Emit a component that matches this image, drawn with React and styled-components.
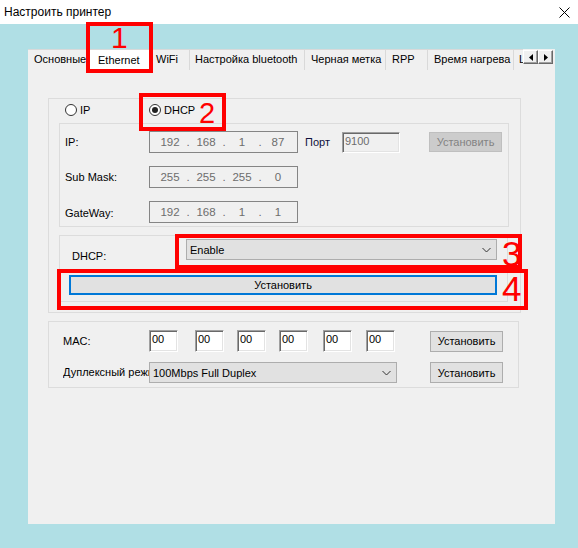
import React from 'react';
import styled, { createGlobalStyle } from 'styled-components';

const GlobalStyle = createGlobalStyle`
	html,
	body {
		margin: 0;
		padding: 0;
		background: #b0dfe5;
	}
	body {
		font-family: 'Liberation Sans', Arial, sans-serif;
		font-size: 11px;
		color: #000;
	}
	* {
		box-sizing: border-box;
	}
`;

// window frame
const Window = styled.div`
	position: relative;
	width: 578px;
	height: 548px;
	display: flex;
	flex-direction: column;
	background: #b0dfe5;
	overflow: hidden;
`;
const TitleBar = styled.div`
	flex: none;
	height: 24px;
	display: flex;
	align-items: center;
	padding-left: 4px;
	background: #fff;
	font-size: 12px;
`;
const Title = styled.span`
	flex: 1;
`;
const Close = styled.svg`
	width: 11px;
	height: 11px;
	margin-right: 8px;
`;
const Body = styled.div`
	flex: 1;
	display: flex;
	padding: 25px 23px 24px 28px;
`;
const Panel = styled.div`
	flex: 1;
	display: flex;
	flex-direction: column;
	background: #f0f0f0;
`;

// tabs
const TabStrip = styled.div`
	flex: none;
	height: 21px;
	display: flex;
`;
const Tabs = styled.div`
	width: 495px;
	display: flex;
	overflow: hidden;
	border-top: 1px solid #d9d9d9;
`;
const Tab = styled.div`
	flex: none;
	width: ${(p) => p.$w}px;
	height: 20px;
	padding-left: ${(p) => p.$pl || 6}px;
	line-height: 19px;
	white-space: nowrap;
	border-right: 1px solid #d9d9d9;
	background: #f0f0f0;
`;
const ActiveTab = styled(Tab)`
	position: relative;
	z-index: 1;
	height: 23px;
	margin: -3px -2px 0;
	padding-top: 3px;
	background: #fff;
	border: 1px solid #d9d9d9;
	border-bottom: none;
`;
const ScrollButtons = styled.div`
	display: flex;
	margin-top: 1px;
`;
const ScrollButton = styled.div`
	width: 15px;
	height: 14px;
	display: flex;
	align-items: center;
	justify-content: center;
	background: #f0f0f0;
	border: 1px solid;
	border-color: #fff #696969 #696969 #fff;
	box-shadow: inset -1px -1px 0 #a0a0a0;
`;

const PanelBody = styled.div`
	display: flex;
	flex-direction: column;
	gap: 8px;
	padding: 28px 0 0 20px;
`;

// groups
const Group = styled.div`
	width: ${(p) => p.$w}px;
	height: ${(p) => (p.$h ? `${p.$h}px` : 'auto')};
	border: 1px solid #dcdcdc;
	padding: ${(p) => p.$pad};
	display: flex;
	flex-direction: column;
`;
const SubBox = styled.div`
	width: ${(p) => p.$w}px;
	height: ${(p) => p.$h}px;
	margin-top: ${(p) => p.$mt || 0}px;
	border: 1px solid #dcdcdc;
	padding: ${(p) => p.$pad};
	display: flex;
	flex-direction: column;
	gap: ${(p) => p.$gap || 0}px;
`;
const RadioRow = styled.div`
	display: flex;
	height: 12px;
	padding-left: 6px;
	margin-bottom: 7px;
	align-items: center;
`;
const RadioItem = styled.label`
	display: flex;
	align-items: center;
	width: ${(p) => p.$w || 'auto'};
	gap: 3px;
	line-height: 12px;
`;
const RadioDot = styled.span`
	width: 12px;
	height: 12px;
	border-radius: 50%;
	border: 1px solid #333;
	background: #fff;
	display: flex;
	align-items: center;
	justify-content: center;

	&::after {
		content: '';
		width: 6px;
		height: 6px;
		border-radius: 50%;
		background: ${(p) => (p.$on ? '#222' : 'transparent')};
	}
`;

const Row = styled.div`
	display: flex;
	align-items: ${(p) => p.$align || 'center'};
	height: ${(p) => p.$h || 22}px;
	margin-top: ${(p) => p.$mt || 0}px;
`;
const Label = styled.span`
	flex: none;
	width: ${(p) => p.$w}px;
	padding-left: ${(p) => p.$pl || 0}px;
	margin-top: ${(p) => p.$mt || 0}px;
	margin-left: ${(p) => p.$ml || 0}px;
	color: ${(p) => p.$color || '#000'};
	white-space: nowrap;
	overflow: hidden;
	line-height: 13px;
`;

const IpBox = styled.div`
	width: 149px;
	height: 22px;
	border: 1px solid #858585;
	display: flex;
	align-items: center;
	padding-left: 5px;
	color: #6d6d6d;
	font-size: 11.5px;
`;
const IpSeg = styled.span`
	width: 30px;
	text-align: center;
`;
const IpDot = styled.span`
	width: 6px;
	text-align: center;
`;

const Sunken = styled.div`
	flex: none;
	width: ${(p) => p.$w}px;
	height: ${(p) => p.$h || 22}px;
	margin-left: ${(p) => p.$ml || 0}px;
	padding: 2px 0 0 2px;
	line-height: 13px;
	background: ${(p) => (p.$disabled ? '#f0f0f0' : '#fff')};
	color: ${(p) => (p.$disabled ? '#6d6d6d' : '#000')};
	border: 1px solid;
	border-color: #a0a0a0 #fff #fff #a0a0a0;
	box-shadow: inset 1px 1px 0 #696969, inset -1px -1px 0 #e3e3e3;
`;

const Button = styled.div`
	flex: none;
	width: ${(p) => (p.$w ? `${p.$w}px` : '100%')};
	height: ${(p) => p.$h || 21}px;
	margin-left: ${(p) => p.$ml || 0}px;
	margin-top: ${(p) => p.$mt || 0}px;
	display: flex;
	align-items: center;
	justify-content: center;
	background: ${(p) => (p.$disabled ? '#cccccc' : '#e1e1e1')};
	color: ${(p) => (p.$disabled ? '#838383' : '#000')};
	border: ${(p) => (p.$focus ? '2px solid #0078d7' : `1px solid ${p.$disabled ? '#bfbfbf' : '#adadad'}`)};
`;

const Select = styled.div`
	flex: none;
	width: ${(p) => p.$w}px;
	height: 21px;
	display: flex;
	align-items: center;
	justify-content: space-between;
	padding: 0 5px 0 3px;
	background: #e1e1e1;
	border: 1px solid #adadad;
`;

// red annotation marks
const Mark = styled.div`
	position: absolute;
	left: ${(p) => p.$x}px;
	top: ${(p) => p.$y}px;
	width: ${(p) => p.$w}px;
	height: ${(p) => p.$h}px;
	border: 4px solid #ff0000;
	pointer-events: none;
	z-index: 5;
`;
const Digit = styled.div`
	position: absolute;
	left: ${(p) => p.$x}px;
	top: ${(p) => p.$y}px;
	font-size: ${(p) => p.$size}px;
	line-height: 1;
	color: #ff0000;
	z-index: 6;
`;

const Chevron = () => (
	<svg width="9" height="6" viewBox="0 0 9 6">
		<path d="M0.5 1 L4.5 5 L8.5 1" fill="none" stroke="#333" strokeWidth="1" />
	</svg>
);

const IpAddress = ({ parts }) => (
	<IpBox>
		<IpSeg>{parts[0]}</IpSeg>
		<IpDot>.</IpDot>
		<IpSeg>{parts[1]}</IpSeg>
		<IpDot>.</IpDot>
		<IpSeg>{parts[2]}</IpSeg>
		<IpDot>.</IpDot>
		<IpSeg>{parts[3]}</IpSeg>
	</IpBox>
);

const macGaps = [0, 17, 13, 13, 15, 14];

const App = () => {
	return (
		<>
			<GlobalStyle />
			<Window>
				<TitleBar>
					<Title>Настроить принтер</Title>
					<Close viewBox="0 0 11 11">
						<path d="M0.5 0.5 L10.5 10.5 M10.5 0.5 L0.5 10.5" stroke="#000" strokeWidth="1" />
					</Close>
				</TitleBar>
				<Body>
					<Panel>
						<TabStrip>
							<Tabs>
								<Tab $w={62}>Основные</Tab>
								<ActiveTab $w={62} $pl={9}>
									Ethernet
								</ActiveTab>
								<Tab $w={42} $pl={8}>
									WiFi
								</Tab>
								<Tab $w={115} $pl={5}>
									Настройка bluetooth
								</Tab>
								<Tab $w={81}>Черная метка</Tab>
								<Tab $w={42}>RPP</Tab>
								<Tab $w={86}>Время нагрева</Tab>
								<Tab $w={60} $pl={5}>
									Label
								</Tab>
							</Tabs>
							<ScrollButtons>
								<ScrollButton>
									<svg width="4" height="7" viewBox="0 0 4 7">
										<polygon points="4,0 0,3.5 4,7" fill="#000" />
									</svg>
								</ScrollButton>
								<ScrollButton>
									<svg width="4" height="7" viewBox="0 0 4 7">
										<polygon points="0,0 4,3.5 0,7" fill="#000" />
									</svg>
								</ScrollButton>
							</ScrollButtons>
						</TabStrip>

						<PanelBody>
							<Group $w={473} $pad="5px 0 10px 10px">
								<RadioRow>
									<RadioItem $w="84px">
										<RadioDot />
										IP
									</RadioItem>
									<RadioItem>
										<RadioDot $on />
										DHCP
									</RadioItem>
								</RadioRow>

								<SubBox $w={450} $h={104} $pad="7px 0 0 5px" $gap={13}>
									<Row>
										<Label $w={84}>IP:</Label>
										<IpAddress parts={['192', '168', '1', '87']} />
										<Label $w={37} $ml={7} $color="#10103c">
											Порт
										</Label>
										<Sunken $w={58} $h={21} $disabled>
											9100
										</Sunken>
										<Button $w={73} $h={20} $ml={29} $disabled>
											Установить
										</Button>
									</Row>
									<Row>
										<Label $w={84}>Sub Mask:</Label>
										<IpAddress parts={['255', '255', '255', '0']} />
									</Row>
									<Row>
										<Label $w={84} $mt={2}>
											GateWay:
										</Label>
										<IpAddress parts={['192', '168', '1', '1']} />
									</Row>
								</SubBox>

								<SubBox $w={449} $h={67} $pad="3px 0 0 9px" $mt={8}>
									<Row $h={21} $align="flex-start">
										<Label $w={117} $pl={3} $mt={11}>
											DHCP:
										</Label>
										<Select $w={311}>
											<span>Enable</span>
											<Chevron />
										</Select>
									</Row>
									<Button $w={428} $h={20} $mt={15} $focus>
										Установить
									</Button>
								</SubBox>
							</Group>

							<Group $w={471} $h={67} $pad="8px 0 0 14px">
								<Row>
									<Label $w={86}>MAC:</Label>
									{macGaps.map((g, i) => (
										<Sunken key={i} $w={29} $ml={g}>
											00
										</Sunken>
									))}
									<Button $w={73} $ml={35}>
										Установить
									</Button>
								</Row>
								<Row $h={21} $mt={10}>
									<Label $w={86}>Дуплексный режим</Label>
									<Select $w={248}>
										<span>100Mbps Full Duplex</span>
										<Chevron />
									</Select>
									<Button $w={73} $ml={33}>
										Установить
									</Button>
								</Row>
							</Group>
						</PanelBody>
					</Panel>
				</Body>

				<Mark $x={86} $y={22} $w={67} $h={51} />
				<Digit $x={111} $y={23} $size={30}>
					1
				</Digit>
				<Mark $x={139} $y={93} $w={87} $h={38} />
				<Digit $x={199} $y={99} $size={29}>
					2
				</Digit>
				<Mark $x={175} $y={234} $w={347} $h={35} />
				<Digit $x={502} $y={236} $size={35}>
					3
				</Digit>
				<Mark $x={57} $y={269} $w={471} $h={41} />
				<Digit $x={502} $y={271} $size={35}>
					4
				</Digit>
			</Window>
		</>
	);
};

export default App;
